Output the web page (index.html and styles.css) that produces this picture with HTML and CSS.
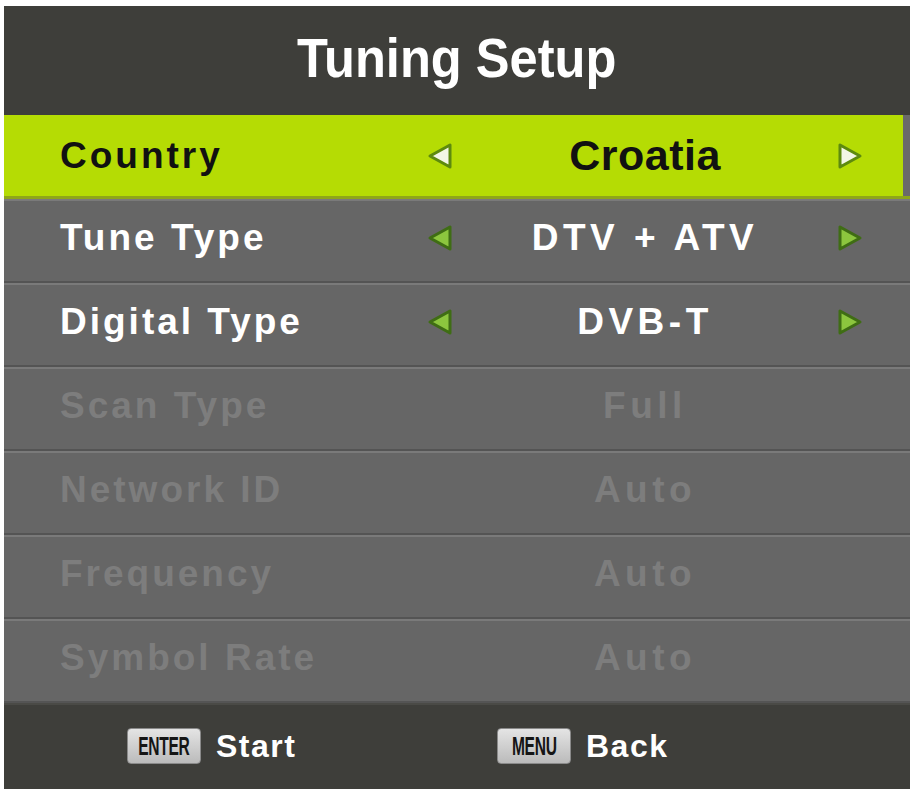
FILE: index.html
```html
<!DOCTYPE html>
<html lang="en">
<head>
<meta charset="utf-8">
<title>Tuning Setup</title>
<link rel="stylesheet" href="styles.css">
</head>
<body>
<div class="panel">
  <div class="header"><h1 class="title">Tuning Setup</h1></div>
  <div class="rows">
    <div class="row selected">
      <span class="label">Country</span>
      <span class="arrow"><svg class="tri" viewBox="0 0 26 30" width="26" height="30"><polygon points="23,4 23,26 3,15"/></svg></span>
      <span class="value big">Croatia</span>
      <span class="arrow"><svg class="tri" viewBox="0 0 26 30" width="26" height="30"><polygon points="3,4 3,26 23,15"/></svg></span>
    </div>
    <div class="row">
      <span class="label">Tune Type</span>
      <span class="arrow"><svg class="tri" viewBox="0 0 26 30" width="26" height="30"><polygon points="23,4 23,26 3,15"/></svg></span>
      <span class="value">DTV + ATV</span>
      <span class="arrow"><svg class="tri" viewBox="0 0 26 30" width="26" height="30"><polygon points="3,4 3,26 23,15"/></svg></span>
    </div>
    <div class="row">
      <span class="label">Digital Type</span>
      <span class="arrow"><svg class="tri" viewBox="0 0 26 30" width="26" height="30"><polygon points="23,4 23,26 3,15"/></svg></span>
      <span class="value">DVB-T</span>
      <span class="arrow"><svg class="tri" viewBox="0 0 26 30" width="26" height="30"><polygon points="3,4 3,26 23,15"/></svg></span>
    </div>
    <div class="row disabled">
      <span class="label">Scan Type</span>
      <span class="arrow"></span>
      <span class="value">Full</span>
      <span class="arrow"></span>
    </div>
    <div class="row disabled">
      <span class="label">Network ID</span>
      <span class="arrow"></span>
      <span class="value">Auto</span>
      <span class="arrow"></span>
    </div>
    <div class="row disabled">
      <span class="label">Frequency</span>
      <span class="arrow"></span>
      <span class="value">Auto</span>
      <span class="arrow"></span>
    </div>
    <div class="row disabled">
      <span class="label">Symbol Rate</span>
      <span class="arrow"></span>
      <span class="value">Auto</span>
      <span class="arrow"></span>
    </div>
  </div>
  <div class="footer">
    <div class="hint"><span class="key"><span class="keytext">ENTER</span></span><span class="hint-text">Start</span></div>
    <div class="hint"><span class="key"><span class="keytext">MENU</span></span><span class="hint-text">Back</span></div>
  </div>
</div>
</body>
</html>
```
FILE: styles.css
```css
html, body {
  margin: 0;
  padding: 0;
  background: #ffffff;
}
body {
  width: 915px;
  height: 789px;
  overflow: hidden;
  font-family: "Liberation Sans", Arial, sans-serif;
}
.panel {
  margin: 6px 0 0 4px;
  width: 906px;
  height: 783px;
  background: #3e3e3a;
  display: flex;
  flex-direction: column;
}
.header {
  height: 109px;
  display: flex;
  align-items: center;
  justify-content: center;
  background: #3e3e3a;
}
.title {
  margin: 0 0 6px 0;
  font-size: 55px;
  font-weight: bold;
  color: #ffffff;
  letter-spacing: 0;
  transform: scaleX(0.92);
}
.rows {
  display: flex;
  flex-direction: column;
}
.row {
  box-sizing: border-box;
  height: 84px;
  display: grid;
  grid-template-columns: 364px 32px 378px 32px;
  align-items: center;
  padding: 0 0 6px 56px;
  background: #666666;
  border-top: 2px solid #7a7a7a;
  border-bottom: 2px solid #545454;
  font-weight: bold;
  font-size: 37px;
  letter-spacing: 3px;
  color: #ffffff;
}
.row.selected {
  background: linear-gradient(to right, #b5dc04 calc(100% - 7px), #6a6a6a 0);
  border-top: 0;
  border-bottom: 3px solid #8ea61a;
  color: #111111;
  padding-bottom: 0;
}
.row.disabled {
  color: #7d7d7d;
}
.label {
  white-space: nowrap;
}
.value {
  text-align: center;
  white-space: nowrap;
  letter-spacing: 4.5px;
}
.value.big {
  font-size: 43px;
  letter-spacing: 0.5px;
}
.arrow {
  display: flex;
  align-items: center;
  justify-content: center;
}
.tri {
  display: block;
  flex: none;
}
.tri polygon {
  fill: #8cc63e;
  stroke: #3f6d14;
  stroke-width: 3;
  stroke-linejoin: round;
}
.selected .tri polygon {
  fill: #f2f6e6;
  stroke: #5d8a0e;
}
.footer {
  flex: 1;
  display: grid;
  grid-template-columns: 370px 1fr;
  align-items: center;
  padding: 0 0 2px 123px;
  background: #3e3e3a;
  border-top: 2px solid #4a4a46;
}
.hint {
  display: flex;
  align-items: center;
  gap: 15px;
}
.key {
  box-sizing: border-box;
  width: 74px;
  height: 36px;
  border-radius: 4px;
  background: linear-gradient(#e4e4e4, #bbbbbb);
  border: 1px solid #8a8a8a;
  display: flex;
  align-items: center;
  justify-content: center;
  overflow: hidden;
}
.keytext {
  display: inline-block;
  font-family: "Liberation Sans", Arial, sans-serif;
  font-size: 26px;
  font-weight: bold;
  color: #151515;
  transform: scaleX(0.6);
  letter-spacing: -0.5px;
}
.hint-text {
  font-size: 32px;
  font-weight: bold;
  color: #ffffff;
  letter-spacing: 1.5px;
}
```
